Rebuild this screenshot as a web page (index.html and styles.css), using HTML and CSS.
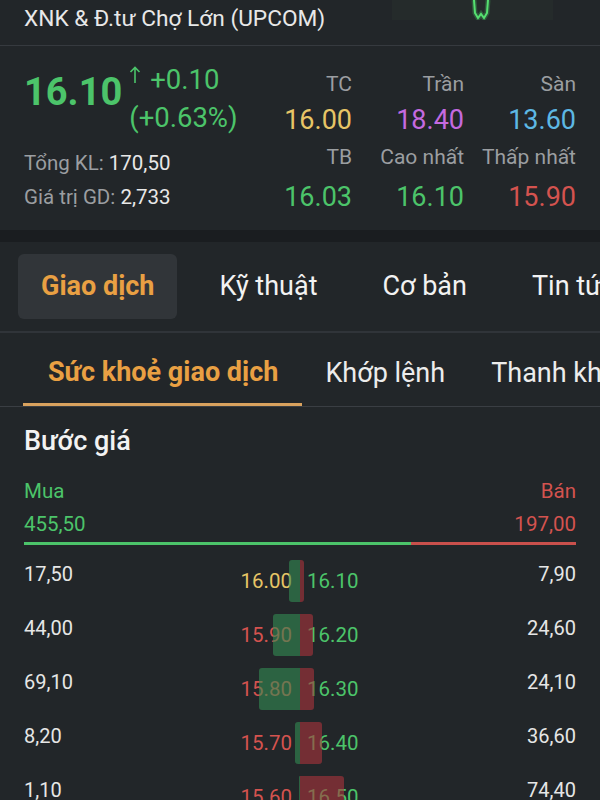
FILE: index.html
```html
<!DOCTYPE html>
<html lang="vi">
<head>
  <meta charset="UTF-8">
  <meta name="viewport" content="width=device-width, initial-scale=1.0">
  <title>Sức khoẻ giao dịch</title>
  <link rel="stylesheet" href="styles.css">
</head>
<body>

  <div class="app">
    <header class="title-bar">
      <div class="stock-name">XNK &amp; Đ.tư Chợ Lớn (UPCOM)</div>
      <div class="mini-chart">
        <svg width="161" height="20" viewBox="0 0 161 20">
          <path d="M82 0 L83 13 L86 18 L89 14 L92 18 L95 13 L96 0" fill="none" stroke="rgba(77,224,106,0.25)" stroke-width="5"/>
          <path d="M82 0 L83 13 L86 18 L89 14 L92 18 L95 13 L96 0" fill="none" stroke="#55e070" stroke-width="2"/>
        </svg>
      </div>
    </header>

    <section class="quote">
      <div class="quote-main">
        <div class="price-row">
          <div class="last-price">16.10</div>
          <div class="change">
            <div class="change-line">
              <svg class="arrow" width="12" height="17" viewBox="0 0 12 17">
                <path d="M6 17 L6 1.5 M1.5 6 L6 1.5 L10.5 6" fill="none" stroke="#4cc46a" stroke-width="1.6"/>
              </svg>
              <span>+0.10</span>
            </div>
            <div>(+0.63%)</div>
          </div>
        </div>
        <div class="stat"><span class="stat-label">Tổng KL:</span> 170,50</div>
        <div class="stat"><span class="stat-label">Giá trị GD:</span> 2,733</div>
      </div>

      <div class="levels">
        <div class="level-label">TC</div>
        <div class="level-label">Trần</div>
        <div class="level-label">Sàn</div>
        <div class="level-value ref">16.00</div>
        <div class="level-value ceil">18.40</div>
        <div class="level-value floor">13.60</div>
        <div class="level-label">TB</div>
        <div class="level-label">Cao nhất</div>
        <div class="level-label">Thấp nhất</div>
        <div class="level-value up">16.03</div>
        <div class="level-value up">16.10</div>
        <div class="level-value down">15.90</div>
      </div>
    </section>

    <div class="spacer"></div>

    <nav class="tabs">
      <div class="tab active">Giao dịch</div>
      <div class="tab">Kỹ thuật</div>
      <div class="tab">Cơ bản</div>
      <div class="tab">Tin tức</div>
    </nav>

    <nav class="sub-tabs">
      <div class="sub-tab active">Sức khoẻ giao dịch</div>
      <div class="sub-tab">Khớp lệnh</div>
      <div class="sub-tab">Thanh khoản</div>
    </nav>

    <section class="steps">
      <h2 class="steps-title">Bước giá</h2>

      <div class="side-row">
        <span class="up">Mua</span>
        <span class="down">Bán</span>
      </div>
      <div class="side-row totals">
        <span class="up">455,50</span>
        <span class="down">197,00</span>
      </div>
      <div class="split-bar">
        <div class="split-buy" style="width: 70.1%"></div>
        <div class="split-sell"></div>
      </div>

      <div class="book">
        <div class="book-row">
          <div class="half bid">
            <span class="vol">17,50</span>
            <span class="price ref">16.00</span>
          </div>
          <div class="half ask">
            <span class="price up">16.10</span>
            <span class="vol">7,90</span>
          </div>
          <div class="depth depth-bid" style="width: 11px"></div>
          <div class="depth depth-ask" style="width: 4px"></div>
        </div>

        <div class="book-row">
          <div class="half bid">
            <span class="vol">44,00</span>
            <span class="price down">15.90</span>
          </div>
          <div class="half ask">
            <span class="price up">16.20</span>
            <span class="vol">24,60</span>
          </div>
          <div class="depth depth-bid" style="width: 27px"></div>
          <div class="depth depth-ask" style="width: 13px"></div>
        </div>

        <div class="book-row">
          <div class="half bid">
            <span class="vol">69,10</span>
            <span class="price down">15.80</span>
          </div>
          <div class="half ask">
            <span class="price up">16.30</span>
            <span class="vol">24,10</span>
          </div>
          <div class="depth depth-bid" style="width: 41px"></div>
          <div class="depth depth-ask" style="width: 14px"></div>
        </div>

        <div class="book-row">
          <div class="half bid">
            <span class="vol">8,20</span>
            <span class="price down">15.70</span>
          </div>
          <div class="half ask">
            <span class="price up">16.40</span>
            <span class="vol">36,60</span>
          </div>
          <div class="depth depth-bid" style="width: 5px"></div>
          <div class="depth depth-ask" style="width: 22px"></div>
        </div>

        <div class="book-row">
          <div class="half bid">
            <span class="vol">1,10</span>
            <span class="price down">15.60</span>
          </div>
          <div class="half ask">
            <span class="price up">16.50</span>
            <span class="vol">74,40</span>
          </div>
          <div class="depth depth-bid" style="width: 1px"></div>
          <div class="depth depth-ask" style="width: 44px"></div>
        </div>
      </div>
    </section>
  </div>

</body>
</html>
```

FILE: styles.css
```css
body {
  background-color: #222629;
  color: #e6e6e6;
  font-family: Roboto, 'Noto Sans', sans-serif;
  margin: 0;
  padding: 0;
}

.app {
  width: 600px;
  height: 800px;
  overflow: hidden;
}

.up { color: #4cc46a; }
.down { color: #d4534f; }
.ref { color: #e7c566; }
.ceil { color: #c46ae0; }
.floor { color: #5db8e4; }

/* top bar */
.title-bar {
  display: flex;
  height: 45px;
  border-bottom: 1px solid #363a3f;
  padding-left: 24px;
}

.stock-name {
  font-size: 22.7px;
  line-height: 37px;
  color: #e8e8e8;
  white-space: nowrap;
}

.mini-chart {
  margin-left: auto;
  margin-right: 47px;
  width: 161px;
  height: 20px;
  background-color: #252b2b;
}

.mini-chart svg {
  display: block;
}

/* quote block */
.quote {
  display: flex;
  justify-content: space-between;
  height: 184px;
  padding: 0 24px;
  box-sizing: border-box;
}

.price-row {
  display: flex;
  gap: 7px;
  padding-top: 17px;
  height: 100px;
  box-sizing: border-box;
}

.last-price {
  font-size: 38px;
  font-weight: 700;
  color: #4cc46a;
  line-height: 1;
  margin-top: 10px;
}

.change {
  font-size: 27.5px;
  line-height: 38px;
  color: #4cc46a;
  margin-top: -2px;
}

.change-line {
  display: flex;
  align-items: flex-start;
  gap: 9px;
}

.arrow {
  display: block;
  margin-top: 5px;
}

.stat {
  font-size: 20.5px;
  line-height: 34px;
  color: #e8e8e8;
}

.stat-label {
  color: #9b9ea1;
}

.levels {
  display: grid;
  grid-template-columns: repeat(3, 112px);
  grid-template-rows: 36px 37px 40px 36px;
  padding-top: 20px;
  text-align: right;
}

.level-label {
  font-size: 21px;
  color: #9b9ea1;
  line-height: 36px;
  white-space: nowrap;
}

.level-value {
  font-size: 27px;
  line-height: 36px;
}

.spacer {
  height: 12px;
  background-color: #1a1d20;
}

/* main tabs */
.tabs {
  display: flex;
  gap: 19px;
  padding: 12px 18px;
  border-bottom: 2px solid #303439;
  white-space: nowrap;
  overflow: hidden;
}

.tab {
  padding: 0 23px;
  height: 65px;
  line-height: 65px;
  font-size: 27px;
  color: #f2f2f2;
  border-radius: 6px;
}

.tab.active {
  background-color: #313539;
  color: #e9a043;
  font-weight: 700;
}

/* sub tabs */
.sub-tabs {
  display: flex;
  padding: 0 0 0 23px;
  height: 73px;
  border-bottom: 1px solid #3a3e43;
  white-space: nowrap;
  overflow: hidden;
}

.sub-tab {
  padding: 0 23px;
  line-height: 80px;
  font-size: 27px;
  color: #ececec;
}

.sub-tab.active {
  padding: 0 24px 0 25px;
  color: #e9a043;
  font-weight: 700;
  border-bottom: 3px solid #d9a25e;
  line-height: 78px;
  height: 70px;
}

/* price steps */
.steps {
  padding: 18px 24px 0;
}

.steps-title {
  margin: 0;
  font-size: 27px;
  font-weight: 500;
  line-height: 32px;
  color: #f2f2f2;
}

.side-row {
  display: flex;
  justify-content: space-between;
  font-size: 20.5px;
  line-height: 26px;
  margin-top: 21px;
}

.side-row.totals {
  margin-top: 7px;
}

.split-bar {
  display: flex;
  height: 3px;
  margin-top: 5px;
}

.split-buy {
  background-color: #4cc46a;
}

.split-sell {
  flex: 1;
  background-color: #c9504c;
}

.book {
  margin-top: 9px;
}

.book-row {
  position: relative;
  display: grid;
  grid-template-columns: 1fr 1fr;
  height: 54px;
}

.half {
  display: flex;
  justify-content: space-between;
  align-items: center;
}

.half.bid {
  padding-right: 8px;
}

.half.ask {
  padding-left: 7px;
}

.vol {
  font-size: 20px;
  color: #e6e6e6;
  margin-top: -14px;
}

.price {
  font-size: 20.5px;
}

.depth {
  position: absolute;
  top: 6px;
  height: 42px;
}

.depth-bid {
  right: 276px;
  background-color: rgba(52, 140, 84, 0.6);
  border-radius: 3px 0 0 3px;
}

.depth-ask {
  left: 276px;
  background-color: rgba(172, 52, 60, 0.6);
  border-radius: 0 3px 3px 0;
}
```
